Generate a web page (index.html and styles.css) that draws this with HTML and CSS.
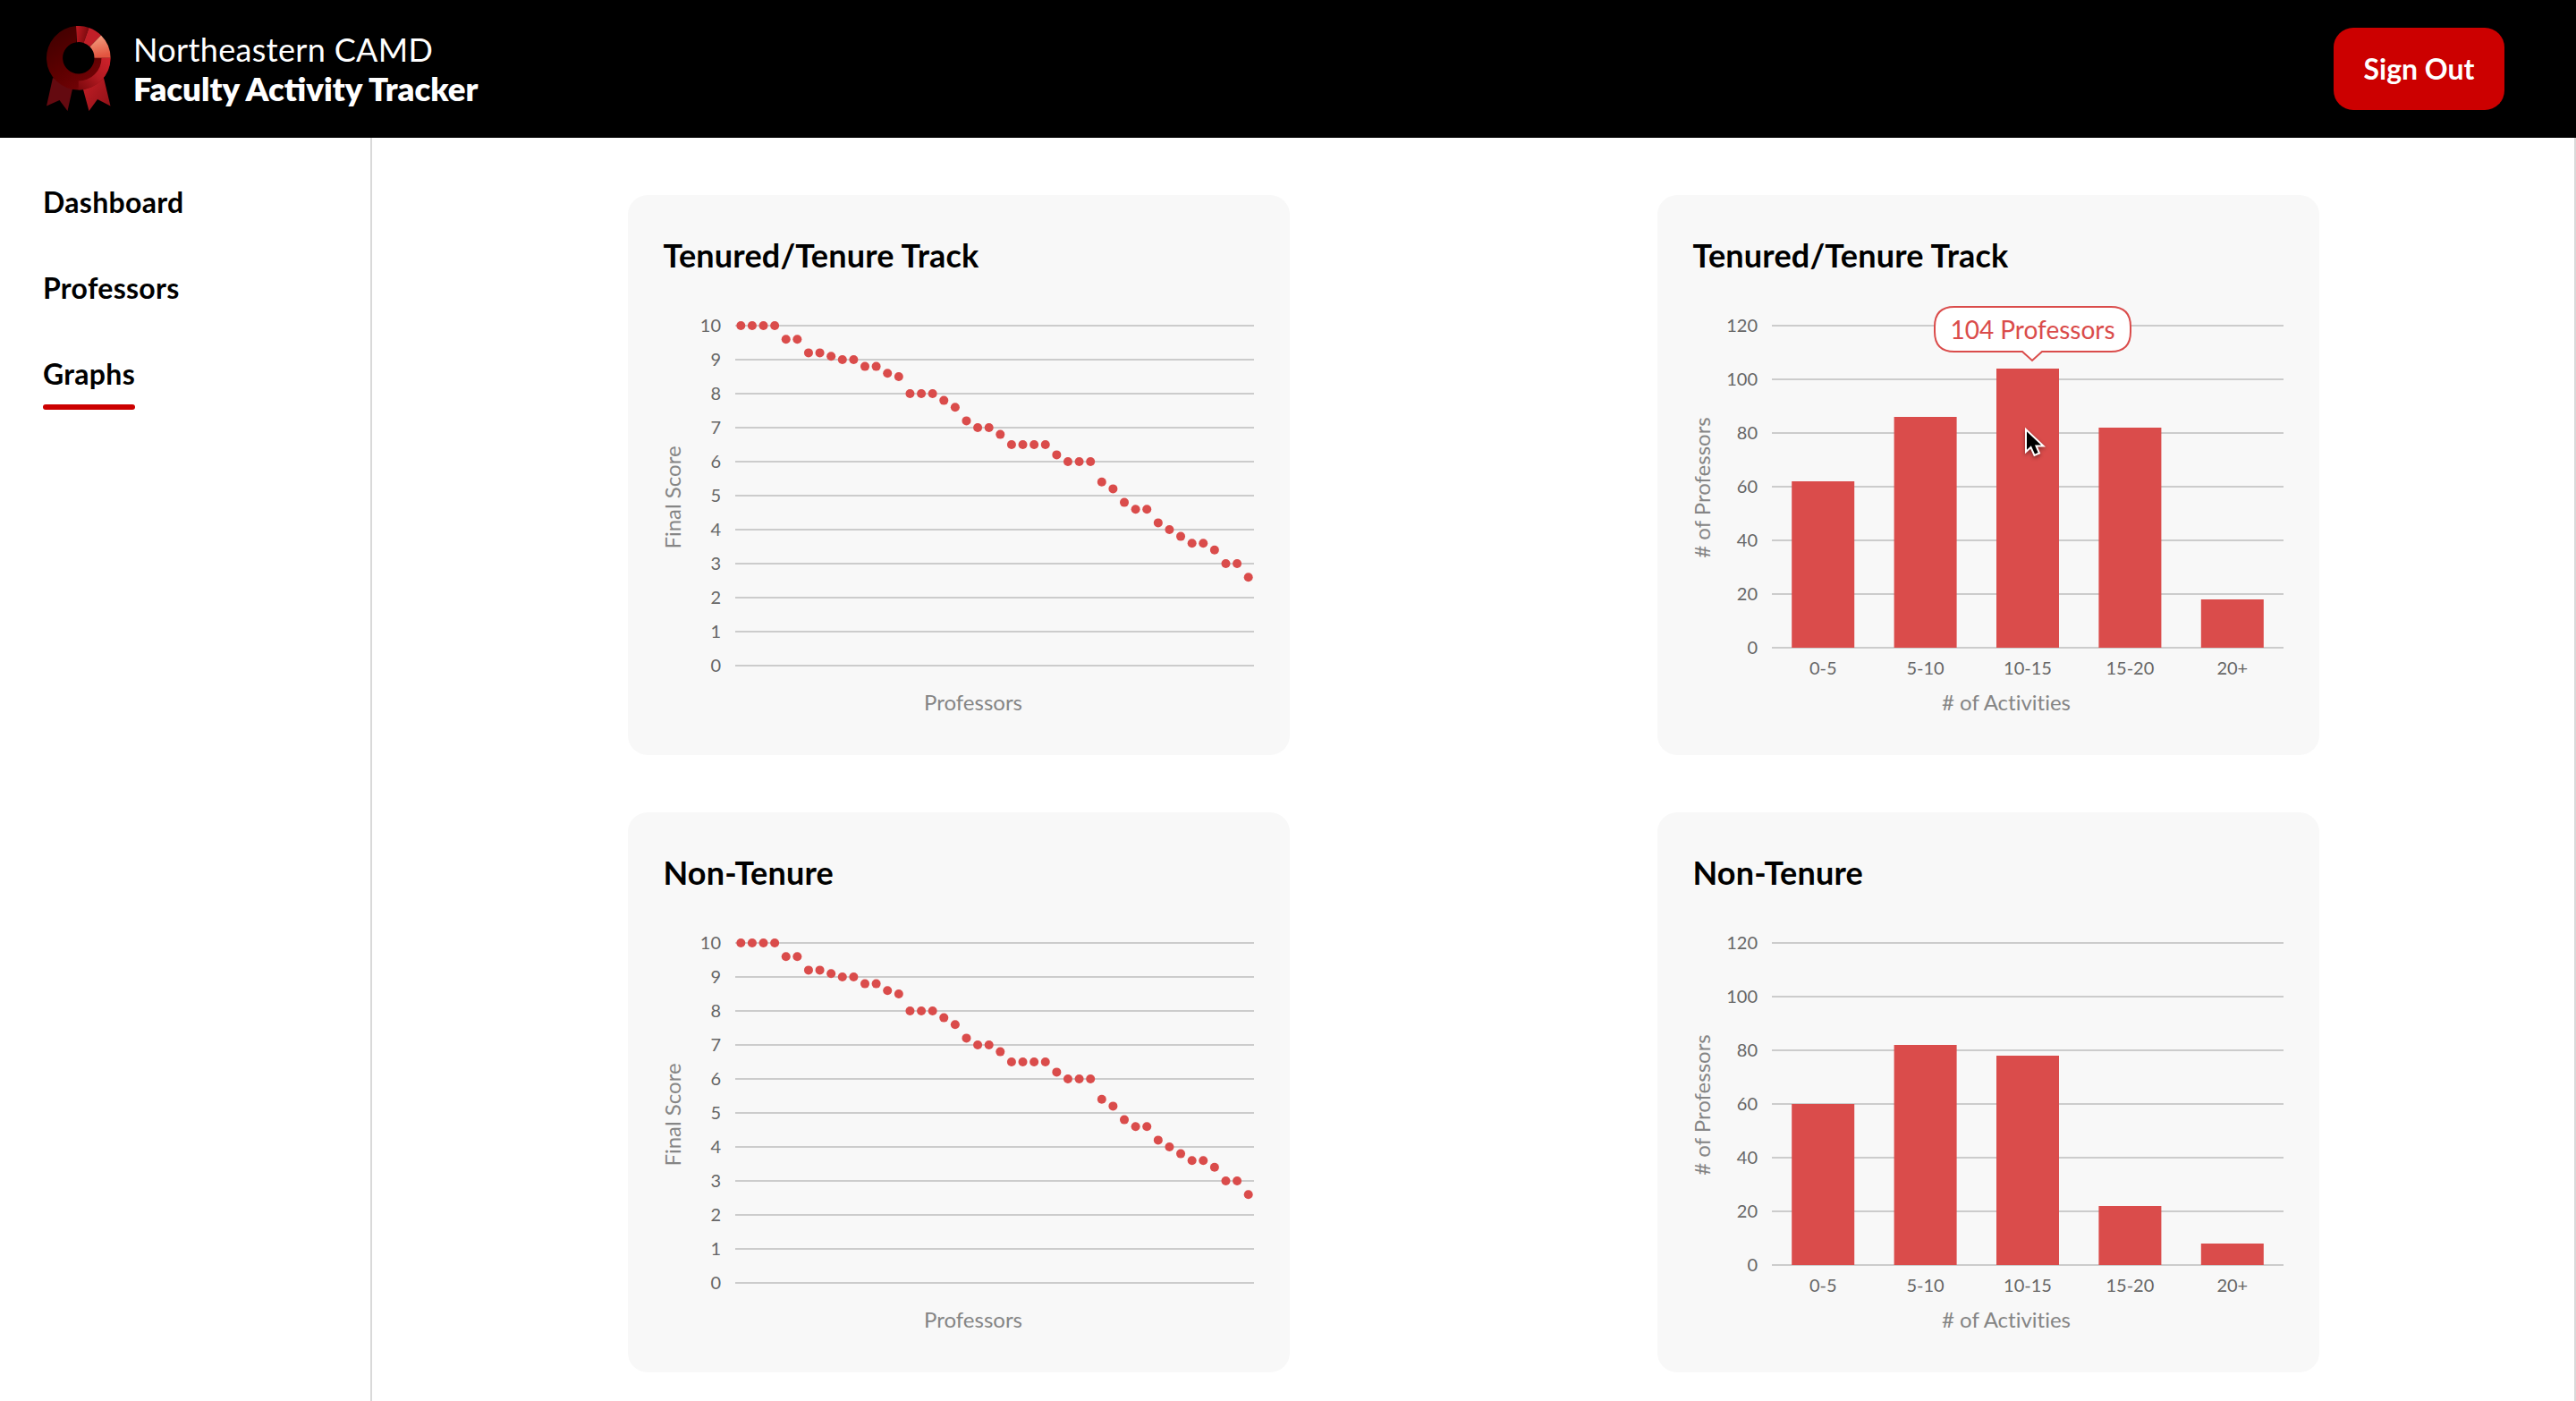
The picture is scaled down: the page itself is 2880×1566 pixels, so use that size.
FILE: index.html
```html
<!DOCTYPE html>
<html lang="en">
<head>
<meta charset="utf-8">
<title>Faculty Activity Tracker</title>
<link rel="stylesheet" href="styles.css">
</head>
<body>
<header class="topbar">
  <div class="brand">
    <svg class="logo" viewBox="0 0 72 95" width="72" height="95" aria-hidden="true">
      <defs>
        <linearGradient id="ringDark" x1="0.2" y1="0.1" x2="0.8" y2="1">
          <stop offset="0" stop-color="#450000"/><stop offset="0.5" stop-color="#5e0000"/><stop offset="0.8" stop-color="#6f0205"/><stop offset="1" stop-color="#a5151c"/>
        </linearGradient>
        <linearGradient id="ringTop" x1="0" y1="0" x2="1" y2="0.3">
          <stop offset="0" stop-color="#c01a22"/><stop offset="1" stop-color="#7a090d"/>
        </linearGradient>
        <linearGradient id="ringLight" x1="0" y1="0" x2="0.2" y2="1">
          <stop offset="0" stop-color="#f5a585"/><stop offset="1" stop-color="#e2543f"/>
        </linearGradient>
        <linearGradient id="ringRight" x1="1" y1="0" x2="0" y2="1">
          <stop offset="0" stop-color="#cf222b"/><stop offset="0.5" stop-color="#b21a21"/><stop offset="1" stop-color="#7a080c"/>
        </linearGradient>
        <linearGradient id="tail" x1="0" y1="0" x2="1" y2="1">
          <stop offset="0" stop-color="#c71f27"/><stop offset="1" stop-color="#8c1016"/>
        </linearGradient>
      </defs>
      <path fill="#640a10" d="M7 58 L0 89.500 L14.500 83 L23.500 95 L30 66 Z"/>
      <path fill="url(#tail)" d="M41 71 L47.500 95 L57 82 L71.500 89.500 L63.500 56 Z"/>
      <path fill="url(#ringDark)" d="M33 0.100 A35.800 35.800 0 1 0 71.600 35.800 L53.500 35.800 A17.700 17.700 0 1 1 33.500 18.200 Z"/>
      <path fill="url(#ringTop)" d="M33 0.100 A35.800 35.800 0 0 1 47.500 2 L41.500 18.900 A17.700 17.700 0 0 0 34 18.200 Z"/>
      <path fill="#c11f28" d="M47.500 2 A35.800 35.800 0 0 1 61 10.500 L48.500 23.300 A17.700 17.700 0 0 0 41.500 18.900 Z"/>
      <path fill="url(#ringLight)" d="M61 10.500 A35.800 35.800 0 0 1 71.600 35.800 H53.500 A17.700 17.700 0 0 0 48.500 23.300 Z"/>
      <path fill="url(#ringRight)" d="M71.600 35.800 A35.800 35.800 0 0 1 35.800 71.600 L35.800 61.500 A25.700 25.700 0 0 0 61.500 35.800 Z"/>
    </svg>
    <div class="brand-text">
      <span class="brand-org">Northeastern CAMD</span>
      <span class="brand-name">Faculty Activity Tracker</span>
    </div>
  </div>
  <button class="sign-out">Sign Out</button>
</header>
<div class="layout">
  <nav class="sidebar">
    <a class="nav-item">Dashboard</a>
    <a class="nav-item">Professors</a>
    <a class="nav-item active">Graphs</a>
  </nav>
  <main class="graphs">
    <section class="card">
      <h2 class="card-title">Tenured/Tenure Track</h2>
      <svg class="chart" data-kind="scatter" width="740" height="500"></svg>
    </section>
    <section class="card">
      <h2 class="card-title">Tenured/Tenure Track</h2>
      <svg class="chart" data-kind="bars" data-values="62,86,104,82,18" width="740" height="500"></svg>
      <svg class="tooltip" width="222" height="66" viewBox="0 0 222 66">
        <path class="tooltip-shape" d="M23 1 H198 Q220 1 220 23 V29 Q220 51 198 51 H121 L110 61 L99 51 H23 Q1 51 1 29 V23 Q1 1 23 1 Z"/>
        <text class="tooltip-text" x="110.500" y="36.500">104 Professors</text>
      </svg>
      <svg class="cursor" width="34" height="42" viewBox="0 0 34 42">
        <path d="M2 3 V28 L7.500 23 L11.500 32 L17 29.500 L13.500 21.500 H21.500 Z"/>
      </svg>
    </section>
    <section class="card">
      <h2 class="card-title">Non-Tenure</h2>
      <svg class="chart" data-kind="scatter" width="740" height="500"></svg>
    </section>
    <section class="card">
      <h2 class="card-title">Non-Tenure</h2>
      <svg class="chart" data-kind="bars" data-values="60,82,78,22,8" width="740" height="500"></svg>
    </section>
  </main>
</div>
<script src="charts.js"></script>
</body>
</html>
```
FILE: styles.css
```css
* { box-sizing: border-box; }
body {
  margin: 0;
  height: 1566px;
  overflow: hidden;
  display: flex;
  flex-direction: column;
  background: #fff;
  color: #000;
  font-family: Lato, "Open Sans", sans-serif;
}
.topbar {
  height: 154px;
  flex: none;
  display: flex;
  align-items: center;
  justify-content: space-between;
  padding: 0 80px 0 51.5px;
  background: #000;
  color: #fff;
}
.brand { display: flex; align-items: center; gap: 25.5px; }
.logo { display: block; margin-bottom: 2px; }
.brand-text { display: flex; flex-direction: column; font-size: 36px; line-height: 44px; }
.brand-org { letter-spacing: 0.35px; }
.brand-name { font-weight: 800; font-size: 36.6px; }
.sign-out {
  width: 191px;
  height: 92px;
  border: 0;
  border-radius: 22px;
  padding: 0 0 2px;
  background: #c00;
  color: #fff;
  font: 700 32px Lato, sans-serif;
}
.layout { flex: 1; display: flex; min-height: 0; border-right: 2px solid #d9d9d9; }
.sidebar {
  width: 416px;
  flex: none;
  display: flex;
  flex-direction: column;
  align-items: flex-start;
  gap: 48px;
  padding: 48px;
  border-right: 2px solid #d9d9d9;
}
.nav-item { height: 48px; font-size: 32px; line-height: 48px; font-weight: 700; letter-spacing: 0.3px; }
.nav-item.active::after {
  content: "";
  display: block;
  height: 6px;
  margin-top: 10px;
  border-radius: 3px;
  background: #c00;
}
.graphs {
  flex: 1;
  display: grid;
  grid-template-columns: 740px 740px;
  grid-auto-rows: 626px;
  justify-content: center;
  align-content: start;
  gap: 64px 411px;
  padding-top: 64px;
}
.card { position: relative; border-radius: 22px; background: #f8f8f8; padding-top: 43px; }
.card-title { margin: 0; padding: 0 0 1px 40px; font-size: 36px; line-height: 48px; font-weight: 700; letter-spacing: 0.18px; }
.chart { display: block; }
.grid-line { stroke: #ccc; stroke-width: 2; }
.tick { font-size: 20px; fill: #666; }
.tick-y { text-anchor: end; }
.tick-x { text-anchor: middle; }
.axis-title { font-size: 24px; fill: #858585; text-anchor: middle; font-variant-ligatures: none; }
.mark { fill: #da4c4b; }
.tooltip { position: absolute; left: 309px; top: 124px; }
.tooltip-shape { fill: #fff; stroke: #da4c4b; stroke-width: 2; }
.tooltip-text { font-size: 28px; fill: #da4c4b; text-anchor: middle; }
.cursor { position: absolute; left: 410px; top: 259px; filter: drop-shadow(0 2px 2px rgba(0, 0, 0, .4)); }
.cursor path { fill: #000; stroke: #fff; stroke-width: 2; }
```
FILE: charts.js
```js
const NS = "http://www.w3.org/2000/svg";
const TOP = 54;
const scores = [10, 10, 10, 10, 9.6, 9.6, 9.2, 9.2, 9.1, 9, 9, 8.8, 8.8, 8.6, 8.5, 8, 8, 8,
  7.8, 7.6, 7.2, 7, 7, 6.8, 6.5, 6.5, 6.5, 6.5, 6.2, 6, 6, 6, 5.4, 5.2, 4.8, 4.6, 4.6,
  4.2, 4, 3.8, 3.6, 3.6, 3.4, 3, 3, 2.6];
const ranges = ["0-5", "5-10", "10-15", "15-20", "20+"];

function add(svg, tag, cls, attrs, text) {
  const el = document.createElementNS(NS, tag);
  el.setAttribute("class", cls);
  for (const k in attrs) el.setAttribute(k, attrs[k]);
  if (text !== undefined) el.textContent = text;
  svg.appendChild(el);
}

// Horizontal grid lines with their value labels, from max at the top to 0.
function axis(svg, left, right, max, step, gap) {
  for (let v = max, y = TOP; v >= 0; v -= step, y += gap) {
    add(svg, "line", "grid-line", { x1: left, x2: right, y1: y, y2: y });
    add(svg, "text", "tick tick-y", { x: left - 16, y: y + 7 }, v);
  }
}

function titles(svg, xText, x, yText, yx, y) {
  add(svg, "text", "axis-title", { x: x, y: 484 }, xText);
  add(svg, "text", "axis-title", { transform: `translate(${yx} ${y}) rotate(-90)` }, yText);
}

document.querySelectorAll(".chart").forEach(svg => {
  if (svg.dataset.kind === "scatter") {
    axis(svg, 120, 700, 10, 1, 38);
    scores.forEach((s, i) => add(svg, "circle", "mark",
      { cx: 120 + (i + 0.5) * 580 / scores.length, cy: TOP + (10 - s) * 38, r: 5 }));
    titles(svg, "Professors", 386, "Final Score", 59, 246);
  } else {
    axis(svg, 128, 700, 120, 20, 60);
    svg.dataset.values.split(",").map(Number).forEach((v, i) => {
      const cx = 128 + (i + 0.5) * 114.4;
      add(svg, "rect", "mark", { x: cx - 35, y: 414 - v * 3, width: 70, height: v * 3 });
      add(svg, "text", "tick tick-x", { x: cx, y: 444 }, ranges[i]);
    });
    titles(svg, "# of Activities", 390, "# of Professors", 59, 235);
  }
});
```
